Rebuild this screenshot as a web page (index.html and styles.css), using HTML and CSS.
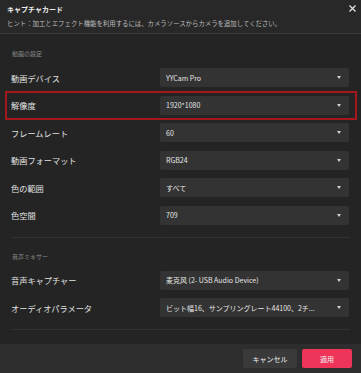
FILE: index.html
```html
<!DOCTYPE html>
<html lang="ja">
<head>
    <meta charset="UTF-8">
    <meta name="viewport" content="width=device-width, initial-scale=1.0">
    <title>キャプチャカード</title>
    <link rel="stylesheet" href="styles.css">
</head>
<body>

<div class="dialog">
    <!-- ヘッダー -->
    <div class="header">
        <div class="title-row">
            <span class="title">キャプチャカード</span>
            <svg class="close" width="7" height="7" viewBox="0 0 7 7">
                <path d="M0.5 0.5 L6.5 6.5 M6.5 0.5 L0.5 6.5" stroke="#e6e6e6" stroke-width="1.2"/>
            </svg>
        </div>
        <div class="hint">ヒント：加工とエフェクト機能を利用するには、カメラソースからカメラを追加してください。</div>
    </div>

    <!-- 動画の設定 -->
    <div class="section">
        <div class="section-title">動画の設定</div>
        <div class="rows">
            <div class="row">
                <span class="label">動画デバイス</span>
                <div class="select"><span class="value">YYCam Pro</span><span class="arrow"></span></div>
            </div>
            <div class="row highlight">
                <span class="label">解像度</span>
                <div class="select"><span class="value">1920*1080</span><span class="arrow"></span></div>
            </div>
            <div class="row">
                <span class="label">フレームレート</span>
                <div class="select"><span class="value">60</span><span class="arrow"></span></div>
            </div>
            <div class="row">
                <span class="label">動画フォーマット</span>
                <div class="select"><span class="value">RGB24</span><span class="arrow"></span></div>
            </div>
            <div class="row">
                <span class="label">色の範囲</span>
                <div class="select"><span class="value">すべて</span><span class="arrow"></span></div>
            </div>
            <div class="row">
                <span class="label">色空間</span>
                <div class="select"><span class="value">709</span><span class="arrow"></span></div>
            </div>
        </div>
    </div>

    <!-- 音声ミキサー -->
    <div class="section second">
        <div class="section-title">音声ミキサー</div>
        <div class="rows">
            <div class="row">
                <span class="label">音声キャプチャー</span>
                <div class="select"><span class="value">麦克风 (2- USB Audio Device)</span><span class="arrow"></span></div>
            </div>
            <div class="row">
                <span class="label">オーディオパラメータ</span>
                <div class="select"><span class="value">ビット幅16、サンプリングレート44100、2チ...</span><span class="arrow"></span></div>
            </div>
        </div>
    </div>

    <!-- フッター -->
    <div class="footer">
        <button class="btn cancel" type="button">キャンセル</button>
        <button class="btn apply" type="button">適用</button>
    </div>
</div>

</body>
</html>
```

FILE: styles.css
```css
* {
    box-sizing: border-box;
}
body {
    margin: 0;
    background-color: #242424;
    font-family: "Noto Sans CJK JP", "Noto Sans", sans-serif;
    color: #e0e0e0;
}
.dialog {
    width: 361px;
    height: 373px;
    display: flex;
    flex-direction: column;
    background-color: #242424;
    overflow: hidden;
}
.header {
    height: 34px;
    padding: 3px 5px 0 7px;
    background-color: #282828;
    border-bottom: 1px solid #3a3a3a;
}
.title-row {
    display: flex;
    justify-content: space-between;
    align-items: center;
    height: 12px;
}
.title {
    font-size: 7px;
    color: #f0f0f0;
    font-weight: bold;
}
.close {
    margin-top: -1px;
}
.hint {
    margin-top: 3px;
    font-size: 6.4px;
    line-height: 12px;
    color: #bdbdbd;
    white-space: nowrap;
}
.section {
    margin: 0 11px 0 11px;
    padding: 16px 0 12px;
    border-bottom: 1px solid #333;
}
.section.second {
    padding-top: 15px;
    padding-bottom: 12px;
}
.section-title {
    font-size: 6px;
    line-height: 8px;
    color: #8a8a8a;
    padding-left: 1px;
    margin-bottom: 10px;
}
.rows {
    display: flex;
    flex-direction: column;
    gap: 8.5px;
}
.row {
    position: relative;
    display: flex;
    align-items: center;
    height: 19px;
    padding-right: 1px;
}
.row.highlight::before {
    content: "";
    position: absolute;
    top: -5px;
    bottom: -5px;
    left: -6px;
    right: -7px;
    border: 2px solid #a3181c;
}
.label {
    width: 149px;
    font-size: 8.2px;
    color: #e2e2e2;
    white-space: nowrap;
}
.select {
    width: 189px;
    height: 19px;
    display: flex;
    align-items: center;
    justify-content: space-between;
    padding: 0 8px 0 6px;
    background-color: #333333;
    border-radius: 2px;
}
.value {
    font-size: 7px;
    color: #e6e6e6;
    white-space: nowrap;
}
.arrow {
    width: 0;
    height: 0;
    border-left: 2.5px solid transparent;
    border-right: 2.5px solid transparent;
    border-top: 3px solid #d0d0d0;
    flex-shrink: 0;
}
.footer {
    margin-top: auto;
    height: 29px;
    display: flex;
    justify-content: flex-end;
    align-items: center;
    gap: 5px;
    padding-right: 9px;
    background-color: #2d2d2d;
}
.btn {
    height: 19px;
    border: none;
    border-radius: 2px;
    font-family: inherit;
    font-size: 7px;
    color: #f2f2f2;
    padding: 0;
    cursor: pointer;
}
.cancel {
    width: 54px;
    background-color: #3a3a3a;
}
.apply {
    width: 50px;
    background-color: #ee3459;
}
```
